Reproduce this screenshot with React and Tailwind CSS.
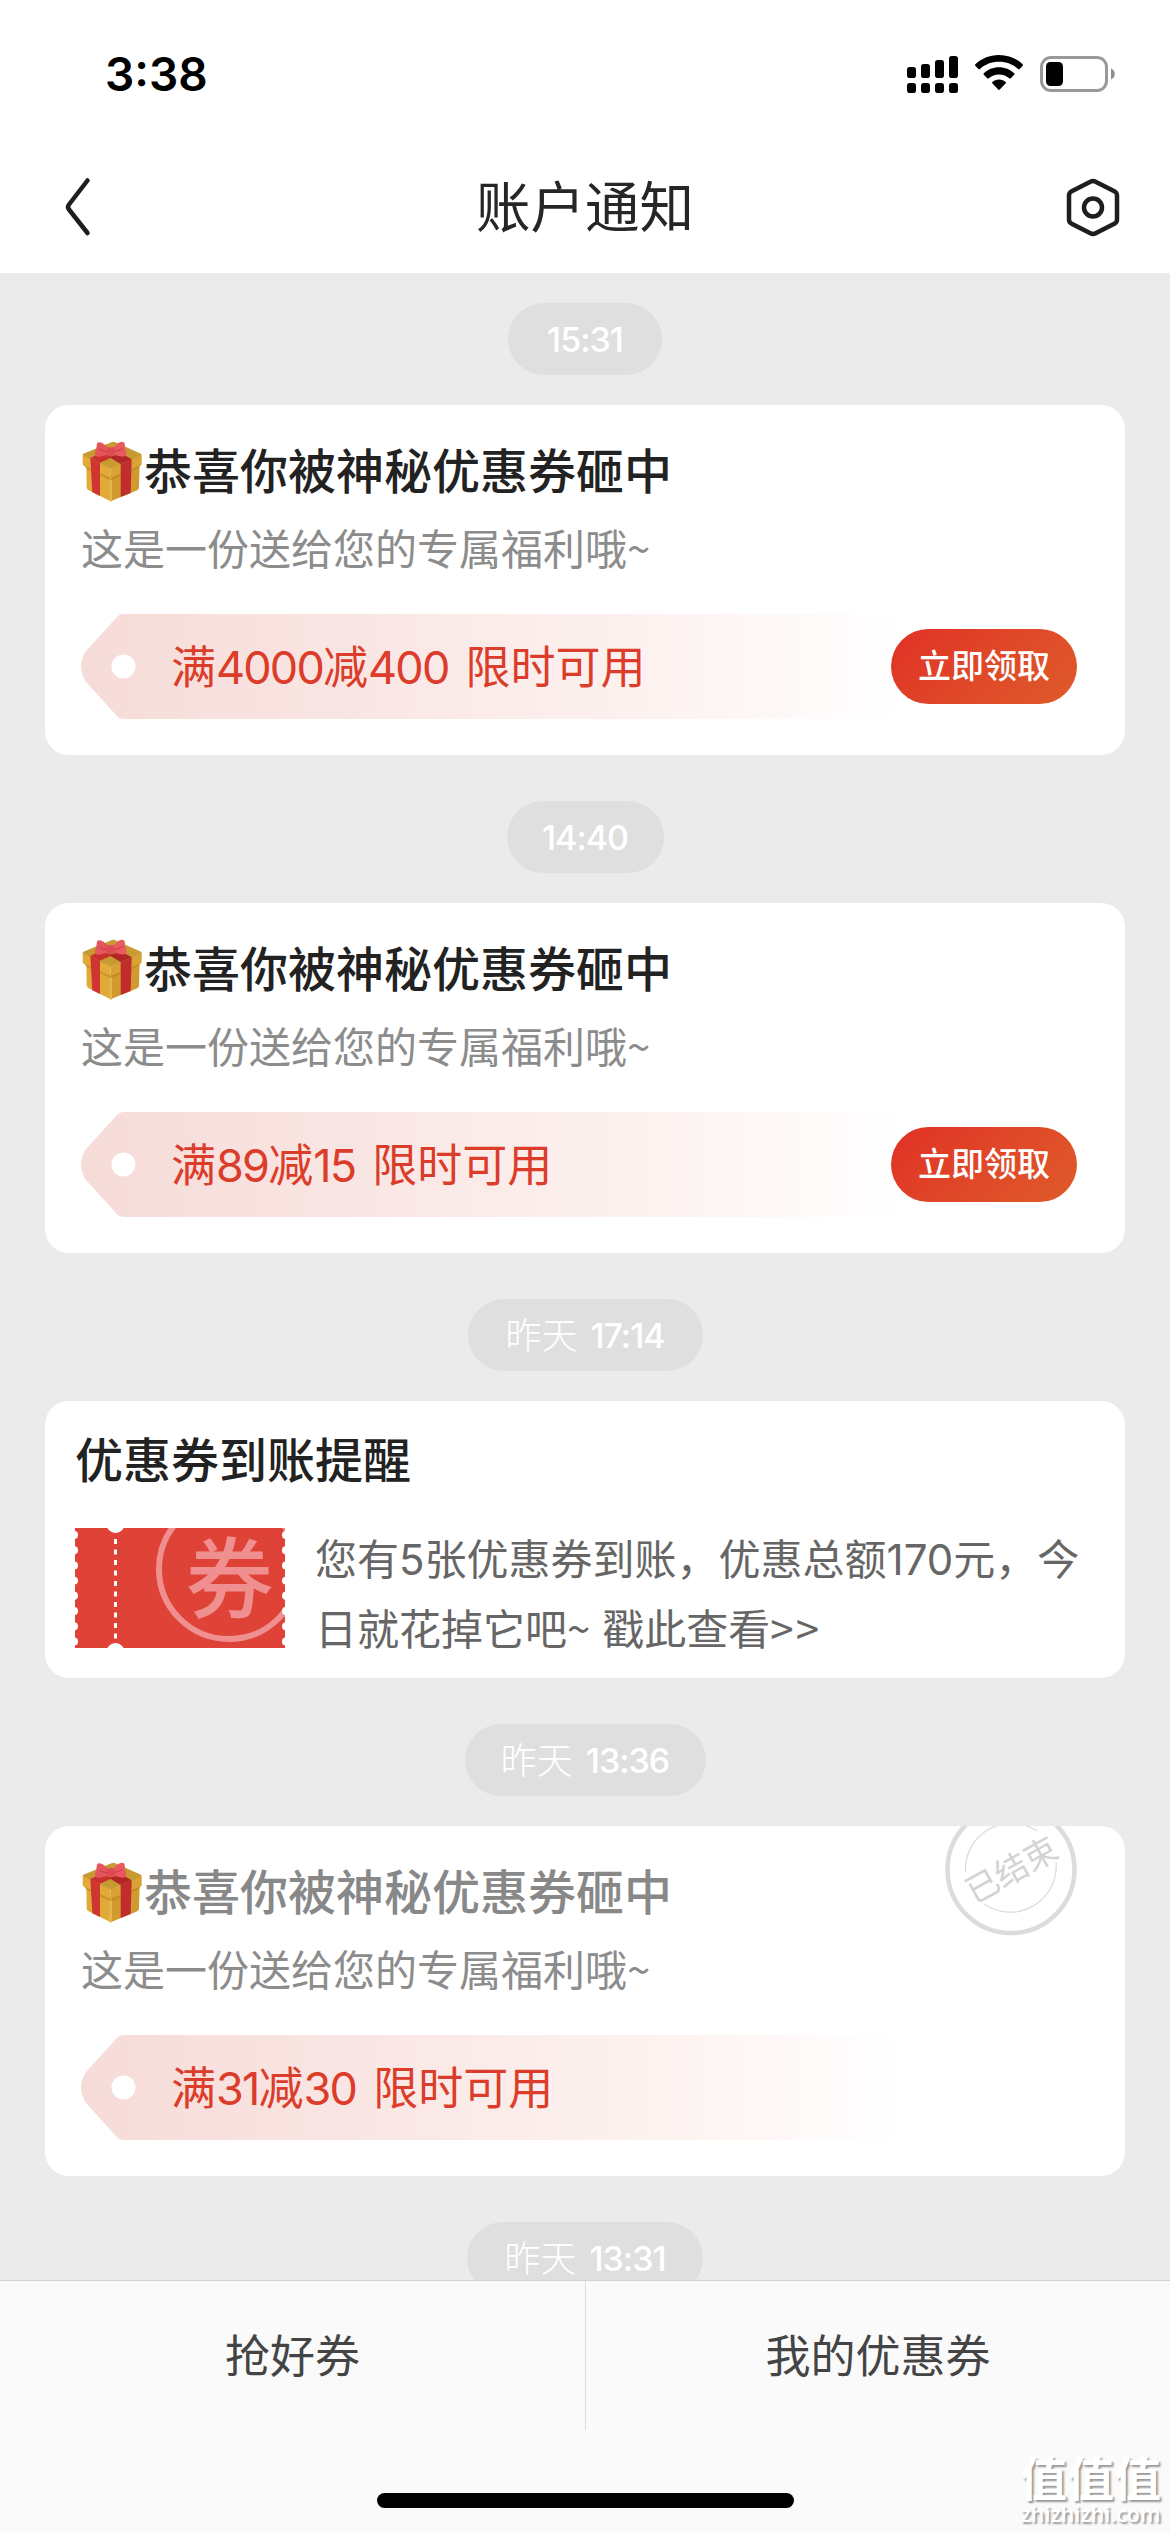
import React from 'react';
import clsx from 'clsx';

const messages = [
  { id: 1, type: 'coupon', time: '15:31', pill: 'w-[154px]', full: '4000', minus: '400' },
  { id: 2, type: 'coupon', time: '14:40', pill: 'w-[157px]', full: '89', minus: '15' },
  { id: 3, type: 'reminder', day: '昨天', time: '17:14', pill: 'w-[235px]' },
  { id: 4, type: 'coupon', day: '昨天', time: '13:36', pill: 'w-[241px]', full: '31', minus: '30', ended: true },
];

const StatusBar = () => (
  <div className="flex h-[141px] items-start justify-between pl-[105px] pr-[54px] pt-[44px]">
    <span className="font-['Inter'] text-[46px] font-semibold leading-[60px] text-black">3:38</span>
    <div className="flex items-center pt-[10px]">
      <svg className="h-[40px] w-[51px]" viewBox="0 0 51 40">
        {[0, 1, 2, 3].map((i) => (
          <g key={i}>
            <rect x={i * 14} y={[13, 10, 6, 2][i]} width="9" height={[11, 14, 18, 22][i]} rx="2.8" />
            <rect x={i * 14} y="29" width="9" height="10" rx="2.8" />
          </g>
        ))}
      </svg>
      <svg className="ml-[17px] h-[40px] w-[48px]" viewBox="0 0 48 40">
        <path d="M24 1C33.5 1 42 4.8 47.6 10.2Q48.4 11 47.7 11.8L44.6 15Q43.9 15.7 43 14.9C38 10.4 31.3 7.8 24 7.8S10 10.4 5 14.9Q4.1 15.7 3.4 15L.3 11.8Q-.4 11 .4 10.2C6 4.8 14.5 1 24 1Z" />
        <path d="M24 13.2C30 13.2 35.3 15.5 39.2 19.2Q40 20 39.2 20.8L35.8 24.2Q35 24.9 34.2 24.2C31.5 21.8 28 20.4 24 20.4S16.5 21.8 13.8 24.2Q13 24.9 12.2 24.2L8.8 20.8Q8 20 8.8 19.2C12.7 15.5 18 13.2 24 13.2Z" />
        <path d="M24 25.5C26.7 25.5 29 26.4 30.7 27.9Q31.4 28.6 30.7 29.3L24.8 35.6Q24 36.4 23.2 35.6L17.3 29.3Q16.6 28.6 17.3 27.9C19 26.4 21.3 25.5 24 25.5Z" />
      </svg>
      <svg className="ml-[17px] h-[40px] w-[76px]" viewBox="0 0 76 40">
        <rect x="1.5" y="3.5" width="65" height="33" rx="9.5" fill="none" stroke="#999" strokeWidth="3" />
        <rect x="6" y="8" width="17" height="24" rx="4.5" />
        <path d="M71 14.5C76 16.5 76 23.5 71 25.5Z" fill="#8f8f8f" />
      </svg>
    </div>
  </div>
);

const NavBar = () => (
  <div className="flex h-[132px] items-center justify-between pl-[63px] pr-[49px]">
    <svg className="h-[60px] w-[54px]" viewBox="0 0 54 60" fill="none" stroke="#1e1e1e" strokeWidth="4.5" strokeLinecap="round" strokeLinejoin="round">
      <path d="M24.5 3.5L6 27.5Q4 30 6 32.5L24.5 56" />
    </svg>
    <h1 className="mb-[7px] mr-[12px] text-[54.5px] leading-[80px] text-[#262626]">账户通知</h1>
    <svg className="h-[60px] w-[56px]" viewBox="0 0 56 60" fill="none" stroke="#1e1e1e" strokeWidth="4.5" strokeLinejoin="round">
      <path d="M25.4 4.7Q28 3.2 30.6 4.7L49.8 14.6Q52 15.9 52 18.5V42.5Q52 45.1 49.8 46.4L30.6 56.3Q28 57.8 25.4 56.3L6.2 46.4Q4 45.1 4 42.5V18.5Q4 15.9 6.2 14.6Z" />
      <circle cx="28" cy="30.5" r="9" />
    </svg>
  </div>
);

const TimePill = ({ day, time, className }) => (
  <div className={clsx('mx-auto flex h-[72px] shrink-0 items-start justify-center rounded-full bg-[#dfdfdf] text-white', className)}>
    {day && <span className="mr-[13px] text-[36px] font-light leading-[68px]">{day}</span>}
    <span className="font-['Inter'] text-[34px] font-medium leading-[74px] tracking-[-1px]">{time}</span>
  </div>
);

const GiftIcon = () => (
  <svg className="mt-[8px] h-[62px] w-[62px]" viewBox="33 48 186 186">
    {/* box */}
    <path d="M49 115L122 150V229L56 196Q50 193 50 187Z" fill="#e0aa38" />
    <path d="M209 115L122 150V229L202 196Q207 193 207 187Z" fill="#d09a2e" />
    <path d="M118 150H126V229L122 230L118 227Z" fill="#e6b64c" />
    {/* lid */}
    <path d="M38 90L122 130V160L44 124Q38 121 38 116Z" fill="#e2ab38" />
    <path d="M215 90L122 130V160L209 124Q215 121 215 116Z" fill="#d8a234" />
    <path d="M40 86L126 51Q130 49 134 51L213 86Q217 89 213 92L126 129Q122 131 118 129L40 92Q36 89 40 86Z" fill="#c79a32" />
    <path d="M44 122L122 159L209 122V127L122 166L48 131Z" fill="#a87318" opacity=".4" />
    {/* ribbon */}
    <path d="M61 99L90 113V213L67 202Z" fill="#d03631" />
    <path d="M152 117L185 103L182 204L152 216Z" fill="#c02d2c" />
    <path d="M61 99L92 84L128 96L90 113Z" fill="#c9302e" />
    <path d="M118 97L152 84L185 103L152 117Z" fill="#b22626" />
    {/* bow */}
    <path d="M120 69C108 66 100 52 88 52C78 52 82 62 78 73C74 85 73 93 82 95C94 97 106 90 116 88Z" fill="#e4555c" />
    <path d="M124 69C136 66 144 50 156 50C168 50 163 62 166 72C169 83 173 92 164 94C152 96 140 92 130 88Z" fill="#e9595f" />
    <path d="M88 72Q98 80 112 80M158 70Q148 78 134 79" fill="none" stroke="#c53a43" strokeWidth="3" />
    <rect x="110" y="67" width="25" height="26" rx="11" fill="#de4a52" />
  </svg>
);

const EndedStamp = () => (
  <svg className="absolute -top-[26px] right-[46px] h-[136px] w-[136px]" viewBox="0 0 136 136" fill="none">
    <circle cx="68" cy="69.5" r="63.5" stroke="#dcdcdc" strokeWidth="4.5" />
    <path d="M22.5 72A46 46 0 0 1 94 31M113 62A46 46 0 0 1 41 104" stroke="#dcdcdc" strokeWidth="1.3" />
    <text x="68" y="82" textAnchor="middle" fontSize="33" fill="#d3d3d3" transform="rotate(-29 68 69)">
      已结束
    </text>
  </svg>
);

const CouponCard = ({ full, minus, ended }) => (
  <div className="relative mx-[45px] mt-[30px] h-[350px] shrink-0 overflow-hidden rounded-[24px] bg-white pl-[36px] pt-[28px]">
    <div className="flex h-[70px] items-center">
      <GiftIcon />
      <h2 className={clsx('ml-[1px] text-[48px] font-medium leading-[70px]', ended ? 'text-[#888]' : 'text-[#222]')}>
        恭喜你被神秘优惠券砸中
      </h2>
    </div>
    <p className="mt-[14px] text-[42px] leading-[60px] text-[#8c8c8c]">这是一份送给您的专属福利哦~</p>
    <div className="relative mt-[37px] flex h-[105px] items-center">
      <svg className="absolute left-0 top-0 h-[105px] w-[820px]" viewBox="0 0 820 105">
        <defs>
          <linearGradient id="tagFill">
            <stop offset="0" stopColor="#f6dcd8" />
            <stop offset=".12" stopColor="#f7dfdc" />
            <stop offset=".72" stopColor="#fdf3f1" />
            <stop offset="1" stopColor="#ffffff" />
          </linearGradient>
        </defs>
        <path d="M43 0H820V105H43Q38 105 35 101L5 68Q-5 52.5 5 37L35 4Q38 0 43 0Z" fill="url(#tagFill)" />
        <circle cx="42.5" cy="52.5" r="12" fill="#fff" />
      </svg>
      <p className="relative mb-[3px] pl-[90px] text-[45px] leading-[66px] text-[#dc3c2a]">
        满<span className="font-['Inter'] leading-none tracking-[-1.8px]">{full}</span>减
        <span className="font-['Inter'] leading-none tracking-[-1.8px]">{minus}</span>
        <span className="ml-[17px]">限时可用</span>
      </p>
      {!ended && (
        <button className="relative ml-auto mr-[48px] h-[75px] w-[186px] rounded-full bg-linear-135 from-[#e02f26] to-[#df5a2a] pb-[5px] text-[33px] font-medium leading-[70px] text-white">
          立即领取
        </button>
      )}
    </div>
    {ended && <EndedStamp />}
  </div>
);

const Ticket = () => (
  <svg className="mt-[6px] h-[120px] w-[210px] shrink-0" viewBox="0 0 210 120">
    <rect width="210" height="120" fill="#df4338" />
    <circle cx="154" cy="41" r="70" fill="none" stroke="#f08f8f" strokeWidth="6" />
    <text x="154.5" y="83" textAnchor="middle" fontSize="88" fontWeight="500" fill="#f08f8f">
      券
    </text>
    <circle cx="40.5" cy="-4" r="9" fill="#fff" />
    <circle cx="40.5" cy="124" r="9" fill="#fff" />
    <path d="M40.5 11V112" stroke="#fff" strokeWidth="3" strokeDasharray="5 5.5" />
    {[7, 22.2, 37.4, 52.6, 67.8, 83, 98.2, 113.4].map((y) => (
      <g key={y} fill="#fff">
        <circle cx="-1" cy={y} r="4" />
        <circle cx="211" cy={y} r="4" />
      </g>
    ))}
  </svg>
);

const ReminderCard = () => (
  <div className="mx-[45px] mt-[30px] h-[277px] shrink-0 overflow-hidden rounded-[24px] bg-white pl-[30px] pr-[40px] pt-[21px]">
    <h2 className="text-[48px] font-medium leading-[70px] text-[#222]">优惠券到账提醒</h2>
    <div className="mt-[30px] flex">
      <Ticket />
      <p className="ml-[30px] whitespace-nowrap text-[42px] leading-[70px] text-[#666]">
        您有<span className="font-['Inter'] leading-none">5</span>张优惠券到账，优惠总额
        <span className="font-['Inter'] leading-none">170</span>元，今
        <br />
        日就花掉它吧~<span className="ml-[12px]">戳此查看</span>
        <span className="tracking-[2px]">&gt;&gt;</span>
      </p>
    </div>
  </div>
);

const Watermark = () => (
  <div className="absolute bottom-[6px] right-[9px] flex w-[141px] flex-col items-center text-white [text-shadow:2px_2px_2px_rgba(0,0,0,0.4)]">
    <span className="text-[47px] font-bold leading-[52px]">值值值</span>
    <span className="font-['Open_Sans'] text-[21.5px] font-semibold leading-[24px]">zhizhizhi.com</span>
  </div>
);

const BottomBar = () => (
  <div className="relative h-[252px] border-t border-[#d2d2d2] bg-[#fafafa] text-[45px] text-[#444]">
    <div className="flex h-[149px] divide-x divide-[#dcdcdc] text-center leading-[146px]">
      <div className="w-[586px]">抢好券</div>
      <div className="flex-1">我的优惠券</div>
    </div>
    <div className="mx-auto mt-[63px] h-[15px] w-[417px] rounded-full bg-black" />
    <Watermark />
  </div>
);

const App = () => {
  return (
    <div className="flex h-[2532px] w-[1170px] flex-col overflow-hidden bg-white font-['Noto_Sans_CJK_SC',sans-serif]">
      <StatusBar />
      <NavBar />

      {/* Message list */}
      <div className="flex h-[2007px] flex-col overflow-hidden bg-[#ebebeb] pt-[30px]">
        {messages.map((m) => (
          <div key={m.id} className="mb-[46px] flex shrink-0 flex-col">
            <TimePill day={m.day} time={m.time} className={m.pill} />
            {m.type === 'coupon' ? <CouponCard full={m.full} minus={m.minus} ended={m.ended} /> : <ReminderCard />}
          </div>
        ))}
        <TimePill day="昨天" time="13:31" className="w-[236px]" />
      </div>

      <BottomBar />
    </div>
  );
};

export default App;
